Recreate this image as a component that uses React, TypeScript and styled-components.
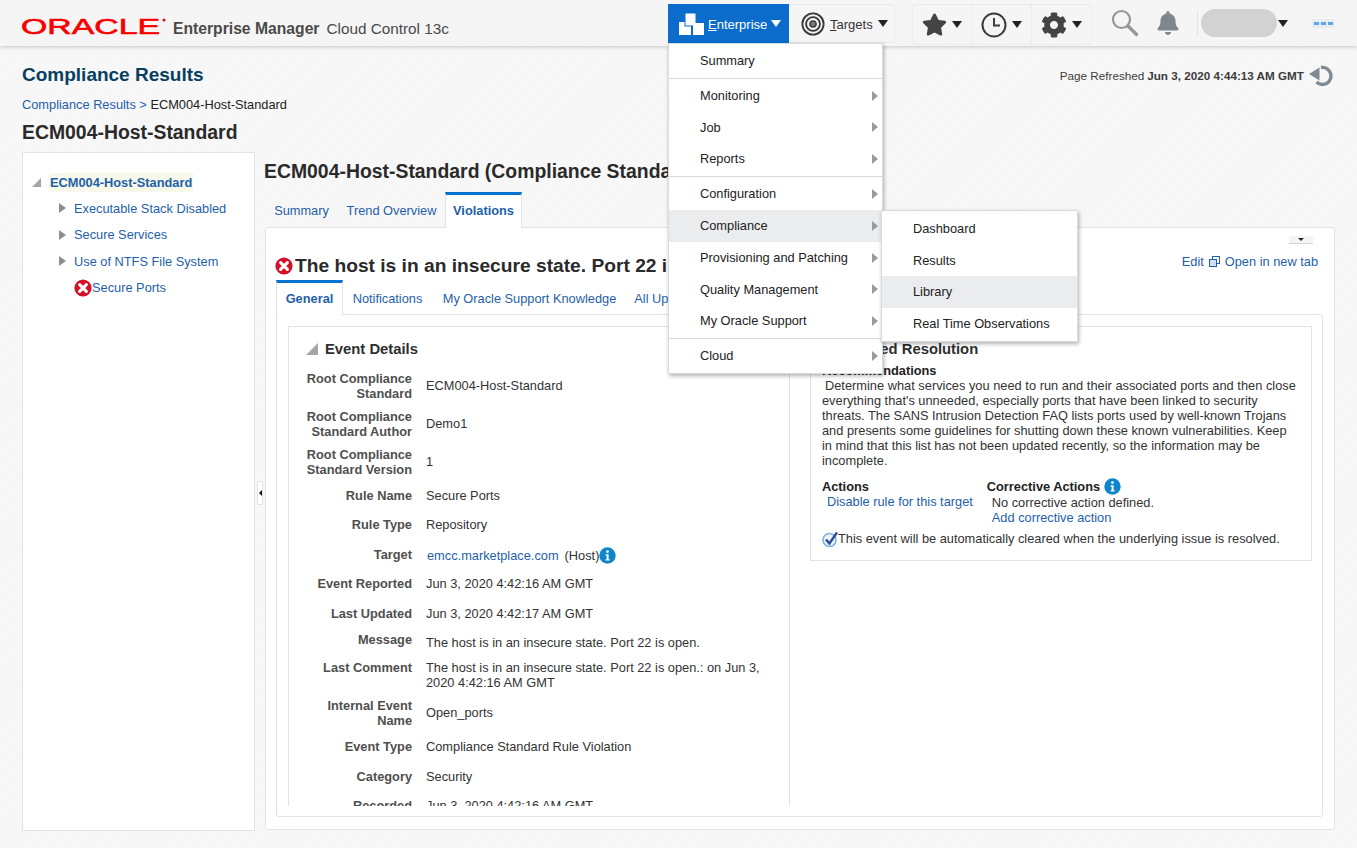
import React from 'react'
import styled, { createGlobalStyle } from 'styled-components'
import { FaBell, FaCog, FaStar } from 'react-icons/fa'

const LINK = '#1f5fa8'
const LINE = '#dfe4ea'

const GlobalStyle = createGlobalStyle`
  html, body {
    margin: 0;
    height: 848px;
    overflow: hidden;
  }
  body {
    font-family: 'Liberation Sans', Arial, sans-serif;
    font-size: 12.8px;
    color: #333;
    background: repeating-linear-gradient(135deg, #f9f9f9 0 1px, #f6f6f6 1px 3px);
  }
`

const Page = styled.div`
  width: 1357px;
  height: 848px;
  overflow: hidden;
  display: flex;
  flex-direction: column;
`

const Header = styled.header`
  height: 46px;
  flex: none;
  position: relative;
  z-index: 5;
  display: flex;
  align-items: flex-start;
  background: #f5f5f5;
  box-shadow: 0 1px 4px rgba(0, 0, 0, 0.2);
`

const Brand = styled.div`
  width: 647px;
  margin-left: 21px;
  display: flex;
  align-items: flex-start;
  padding-top: 10px;
  gap: 6px;
`

const BrandTitle = styled.div`
  margin-top: 10px;
  font-size: 15.3px;
  line-height: 18px;
  color: #4a4a4a;
  white-space: nowrap;
  b {
    font-size: 15.7px;
    margin-right: 7px;
  }
`

const EnterpriseWrap = styled.div`
  position: relative;
  margin-top: 4px;
`

const EnterpriseButton = styled.div`
  width: 121px;
  height: 39px;
  box-sizing: border-box;
  padding-left: 10px;
  display: flex;
  align-items: center;
  gap: 3px;
  background: #0b6ccb;
  color: #fff;
  font-size: 13px;
  span:first-of-type {
    margin: 2px 1px 0 0;
  }
`

const TargetsButton = styled.div`
  width: 106px;
  height: 39px;
  margin-top: 4px;
  box-sizing: border-box;
  padding-left: 12px;
  display: flex;
  align-items: center;
  gap: 5px;
  color: #333;
  font-size: 13px;
  border: 1px solid #ebebeb;
  border-left: none;
  border-radius: 0 3px 3px 0;
  span:first-of-type {
    margin-top: 2px;
  }
`

const Caret = styled.span<{ $color?: string; $gap?: number }>`
  width: 0;
  height: 0;
  margin-left: ${(p) => p.$gap ?? 3}px;
  border-left: 5px solid transparent;
  border-right: 5px solid transparent;
  border-top: 7px solid ${(p) => p.$color ?? '#222'};
`

const IconGroup = styled.div`
  margin: 4px 0 0 17px;
  display: flex;
  height: 39px;
  border: 1px solid #ebebeb;
  border-radius: 3px;
`

const IconCell = styled.div`
  width: 58.5px;
  display: flex;
  align-items: center;
  justify-content: center;
  gap: 2px;
  & + & {
    border-left: 1px solid #ebebeb;
  }
`

const HeaderTools = styled.div`
  margin-left: 19px;
  height: 46px;
  display: flex;
  align-items: center;
`

const Divider = styled.div`
  width: 1px;
  height: 26px;
  margin: 0 3px 0 17px;
  background: #dde6ee;
`

const UserPill = styled.div`
  width: 76px;
  height: 28px;
  border-radius: 14px;
  background: #d2d2d2;
`

const Dots = styled.div`
  margin-left: 24px;
  width: 23px;
  height: 9px;
  display: flex;
  align-items: center;
  justify-content: center;
  gap: 2px;
  background: #e9edf2;
  i {
    width: 5px;
    height: 3px;
    background: #5aa6f0;
  }
`

const Menu = styled.div`
  position: absolute;
  left: 0;
  top: 39px;
  width: 215px;
  height: 331px;
  background: #fff;
  border: 1px solid #d5dbe2;
  box-sizing: border-box;
  box-shadow: 1px 2px 4px rgba(0, 0, 0, 0.3);
  color: #222;
  z-index: 10;
`

const MenuSection = styled.div`
  padding: 1px 0;
  border-bottom: 1px solid #d5dbe2;
  &:last-child {
    border-bottom: none;
  }
`

const MenuItem = styled.div<{ $active?: boolean }>`
  position: relative;
  height: 31.8px;
  line-height: 31.8px;
  padding-left: 31px;
  background: ${(p) => (p.$active ? '#ebecee' : 'transparent')};
  white-space: nowrap;
`

const MenuArrow = styled.span`
  position: absolute;
  right: 4px;
  top: 50%;
  margin-top: -5px;
  width: 0;
  height: 0;
  border-top: 5px solid transparent;
  border-bottom: 5px solid transparent;
  border-left: 6px solid #9a9a9a;
`

const SubMenu = styled.div`
  position: absolute;
  left: 212px;
  top: 0;
  width: 197px;
  height: 132px;
  padding: 2px 0 0;
  box-sizing: border-box;
  background: #fff;
  border: 1px solid #d5dbe2;
  box-shadow: 1px 2px 4px rgba(0, 0, 0, 0.3);
`

const SubItem = styled.div<{ $active?: boolean }>`
  height: 31.7px;
  line-height: 31.7px;
  padding-left: 31px;
  background: ${(p) => (p.$active ? '#ebecee' : 'transparent')};
`

const Main = styled.main`
  flex: 1;
  min-height: 0;
  padding: 0 22px;
  display: flex;
  flex-direction: column;
`

const TitleRow = styled.div`
  height: 50px;
  display: flex;
  align-items: flex-start;
  justify-content: space-between;
  padding-top: 17px;
  box-sizing: border-box;
`

const PageTitle = styled.h1`
  margin: 0;
  font-size: 19px;
  line-height: 23px;
  font-weight: bold;
  color: #07405f;
`

const Refreshed = styled.div`
  margin: -1px 1px 0 0;
  display: flex;
  align-items: center;
  gap: 4px;
  font-size: 11.7px;
  line-height: 23px;
  color: #3c3c3c;
  b {
    margin-left: 3px;
  }
`

const Crumbs = styled.div`
  height: 17px;
  line-height: 17px;
  color: #222;
  a {
    color: ${LINK};
  }
`

const SubTitle = styled.h2`
  margin: 7px 0 8px;
  font-size: 19.4px;
  line-height: 24px;
  font-weight: bold;
  color: #2a2a2a;
`

const Body = styled.div`
  height: 679px;
  flex: none;
  display: flex;
`

const TreePanel = styled.aside`
  width: 233px;
  flex: none;
  box-sizing: border-box;
  background: #fff;
  border: 1px solid ${LINE};
  padding-top: 20px;
`

const TreeRoot = styled.div`
  height: 19px;
  display: flex;
  align-items: center;
  margin-bottom: 3px;
`

const RootLabel = styled.span`
  margin-left: 8px;
  padding: 0 1px;
  line-height: 19px;
  font-weight: bold;
  color: ${LINK};
  background: #f6f8ea;
`

const TreeChild = styled.div`
  height: 26.5px;
  display: flex;
  align-items: center;
  padding-left: 51px;
  color: ${LINK};
`

const TreeToggle = styled.span`
  width: 0;
  height: 0;
  margin: 0 8px 0 -15px;
  border-top: 5px solid transparent;
  border-bottom: 5px solid transparent;
  border-left: 7px solid #8f8f8f;
`

const OpenToggle = styled.span<{ $ml: number; $size: number }>`
  width: 0;
  height: 0;
  margin-left: ${(p) => p.$ml}px;
  border-left: ${(p) => p.$size}px solid transparent;
  border-bottom: ${(p) => p.$size}px solid #a6a6a6;
`

const Splitter = styled.div`
  width: 10px;
  flex: none;
  display: flex;
  align-items: center;
  justify-content: center;
`

const SplitterHandle = styled.div`
  width: 6px;
  height: 24px;
  margin-top: 2px;
  display: flex;
  align-items: center;
  justify-content: center;
  background: #fff;
  border: 1px solid ${LINE};
  box-sizing: border-box;
  &::before {
    content: '';
    border-top: 3px solid transparent;
    border-bottom: 3px solid transparent;
    border-right: 3px solid #111;
  }
`

const Content = styled.section`
  flex: 1;
  min-width: 0;
  display: flex;
  flex-direction: column;
`

const ContentTitle = styled.h2`
  margin: 7px 0 9px -1px;
  font-size: 19.4px;
  line-height: 24px;
  font-weight: bold;
  color: #2a2a2a;
  white-space: nowrap;
  overflow: hidden;
`

const Tabs = styled.div<{ $h: number }>`
  height: ${(p) => p.$h}px;
  flex: none;
  display: flex;
  position: relative;
  z-index: 1;
`

const Tab = styled.div<{ $w: number; $active?: boolean }>`
  width: ${(p) => p.$w}px;
  box-sizing: border-box;
  height: calc(100% + 1px);
  line-height: ${(p) => (p.$active ? 32 : 38)}px;
  text-align: center;
  color: ${LINK};
  white-space: nowrap;
  font-weight: ${(p) => (p.$active ? 'bold' : 'normal')};
  background: ${(p) => (p.$active ? '#fff' : 'transparent')};
  border-top: ${(p) => (p.$active ? '3px solid #0572ce' : 'none')};
  border-left: ${(p) => (p.$active ? `1px solid ${LINE}` : 'none')};
  border-right: ${(p) => (p.$active ? `1px solid ${LINE}` : 'none')};
`

const TabPanel = styled.div`
  flex: 1;
  min-height: 0;
  margin-bottom: 1px;
  position: relative;
  display: flex;
  flex-direction: column;
  padding: 0 11px 12px 10px;
  background: #fff;
  border: 1px solid ${LINE};
  border-radius: 3px;
`

const PanelTop = styled.div`
  height: 52px;
  flex: none;
  display: flex;
  justify-content: space-between;
  align-items: flex-start;
  white-space: nowrap;
`

const Headline = styled.div`
  margin-top: 26px;
  margin-left: -1px;
  display: flex;
  align-items: center;
  gap: 2px;
  font-size: 19.2px;
  line-height: 24px;
  font-weight: bold;
  color: #2a2a2a;
`

const EditLinks = styled.div`
  margin: 26px 5px 0 0;
  display: flex;
  align-items: center;
  gap: 5px;
  color: ${LINK};
`

const DropTab = styled.div`
  position: absolute;
  right: 21px;
  top: 8px;
  width: 24px;
  height: 7px;
  display: flex;
  justify-content: center;
  background: #f4f4f4;
  border-bottom: 1px solid #d5d5d5;
  &::before {
    content: '';
    margin-top: 2px;
    height: 0;
    border-left: 3px solid transparent;
    border-right: 3px solid transparent;
    border-top: 3px solid #222;
  }
`

const InnerPanel = styled.div`
  flex: 1;
  min-height: 0;
  display: flex;
  gap: 20px;
  padding: 11px 10px 10px 11px;
  background: #fff;
  border: 1px solid ${LINE};
  border-radius: 3px;
`

const DetailBox = styled.div`
  width: 502px;
  height: 480px;
  flex: none;
  box-sizing: border-box;
  border: 1px solid ${LINE};
  border-bottom: none;
  overflow: hidden;
  padding-top: 12px;
`

const RightBox = styled.div`
  width: 502px;
  height: 235px;
  flex: none;
  box-sizing: border-box;
  border: 1px solid ${LINE};
  padding: 12px 11px 0;
`

const SectionHead = styled.div`
  height: 20px;
  display: flex;
  align-items: center;
  gap: 7px;
  font-size: 14.8px;
  font-weight: bold;
  color: #2f2f2f;
  margin-bottom: 4px;
  white-space: nowrap;
`

const DetailHead = styled(SectionHead)`
  margin-left: 17px;
`

const DetailList = styled.div`
  margin-top: 7.5px;
`

const DetailRow = styled.div<{ $tall?: boolean; $h?: number }>`
  display: grid;
  grid-template-columns: 123px 1fr;
  column-gap: 14px;
  height: ${(p) => p.$h ?? (p.$tall ? 38 : 29.5)}px;
  box-sizing: border-box;
  padding-top: ${(p) => (p.$tall ? 4 : 7)}px;
`

const DetailLabel = styled.div`
  text-align: right;
  font-weight: bold;
  line-height: 15px;
  color: #4f4f4f;
`

const DetailValue = styled.div<{ $top?: number }>`
  line-height: 15px;
  color: #333;
  display: flex;
  flex-wrap: wrap;
  align-items: center;
  align-self: start;
  margin-top: ${(p) => p.$top ?? 0}px;
`

const Link = styled.a`
  color: ${LINK};
  white-space: nowrap;
`

const HostLink = styled(Link)`
  margin-left: 1px;
`

const HostSuffix = styled.span`
  margin-left: 6px;
`

const Paragraph = styled.p`
  margin: 0 0 10px;
  line-height: 15px;
  color: #333;
  white-space: nowrap;
  &::first-line {
    word-spacing: 0.1px;
  }
  text-indent: 3px;
`

const Strong = styled.div`
  height: 16px;
  font-weight: bold;
  line-height: 15px;
  color: #222;
  display: flex;
  align-items: center;
  gap: 4px;
`

const RecommendTitle = styled(Strong)`
  height: 15px;
`

const ActionColumns = styled.div`
  display: flex;
  gap: 14px;
  line-height: 15px;
`

const ActionBlock = styled.div`
  display: flex;
  flex-direction: column;
`

const ActionBody = styled.div<{ $top: number }>`
  padding-left: 5px;
  padding-top: ${(p) => p.$top}px;
`

const AutoClear = styled.div`
  margin-top: 5px;
  display: flex;
  align-items: center;
  color: #333;
  line-height: 18px;
`

/* icons */

const ErrorIcon = ({ size = 18 }: { size?: number }) => (
  <svg width={size} height={size} viewBox="0 0 18 18" style={{ flex: 'none' }}>
    <circle cx="9" cy="9" r="8.6" fill="#d3122a" />
    <path d="M5.6 5.6l6.8 6.8M12.4 5.6l-6.8 6.8" stroke="#fff" strokeWidth="3" strokeLinecap="round" />
  </svg>
)

const InfoIcon = () => (
  <svg width="17" height="17" viewBox="0 0 17 17" style={{ flex: 'none' }}>
    <circle cx="8.5" cy="8.5" r="8.2" fill="#0f86cc" />
    <circle cx="8.5" cy="4.6" r="1.4" fill="#fff" />
    <path d="M6.6 7.2h3v5h1v1.3H6.6v-1.3h1v-3.7h-1z" fill="#fff" />
  </svg>
)

const OracleLogo = () => (
  <svg width="146" height="30" viewBox="0 0 146 30" style={{ flex: 'none' }}>
    <text
      x="0"
      y="24"
      textLength="139"
      lengthAdjust="spacingAndGlyphs"
      fontFamily="'Liberation Sans', Arial, sans-serif"
      fontSize="22.5"
      fill="#f80000"
      stroke="#f80000"
      strokeWidth="0.6"
    >
      ORACLE
    </text>
    <circle cx="143" cy="10" r="1.5" fill="#f80000" />
  </svg>
)

const EnterpriseIcon = () => (
  <svg width="27" height="24" viewBox="0 0 27 24" fill="#fff" style={{ flex: 'none' }}>
    <rect x="1" y="10" width="12" height="13" />
    <rect x="7" y="1" width="11" height="13" stroke="#0b6ccb" strokeWidth="1" />
    <rect x="15" y="11" width="11" height="12" />
  </svg>
)

const TargetIcon = () => (
  <svg width="24" height="24" viewBox="0 0 26 26" fill="none" stroke="#3a3a3a" style={{ flex: 'none' }}>
    <circle cx="13" cy="13" r="11.5" strokeWidth="2" />
    <circle cx="13" cy="13" r="7.5" strokeWidth="2" />
    <circle cx="13" cy="13" r="3.4" fill="#777" strokeWidth="1.5" />
  </svg>
)

const ClockIcon = () => (
  <svg width="26" height="26" viewBox="0 0 26 26" fill="none" stroke="#3c3c3c" strokeWidth="2">
    <circle cx="13" cy="13" r="11.5" />
    <path d="M13 6v7.5h6" />
  </svg>
)

const SearchIcon = () => (
  <svg width="28" height="28" viewBox="0 0 28 28" fill="none" style={{ flex: 'none' }}>
    <circle cx="10.5" cy="10.5" r="8.5" stroke="#92979b" strokeWidth="2.2" />
    <path d="M17 17l8.5 8.5" stroke="#92979b" strokeWidth="3.2" strokeLinecap="round" />
  </svg>
)

const RefreshIcon = () => (
  <svg width="26" height="26" viewBox="0 0 26 26" fill="none" style={{ flex: 'none' }}>
    <path d="M13 5.5A8.5 8.5 0 1 1 8.5 20" stroke="#7f8b94" strokeWidth="3.4" />
    <path d="M1 12L11.5 5.5v13z" fill="#7f8b94" />
  </svg>
)

const CheckIcon = () => (
  <svg width="16" height="18" viewBox="0 0 16 18" fill="none" style={{ flex: 'none' }}>
    <circle cx="7.5" cy="10" r="6.5" stroke="#7fb3da" strokeWidth="1.6" fill="#eef5fa" />
    <path d="M4 9.5l3.4 4L15 2.5" stroke="#2b4f8f" strokeWidth="2.4" />
  </svg>
)

const CopyIcon = () => (
  <svg width="11" height="11" viewBox="0 0 11 11" fill="none" stroke={LINK} style={{ flex: 'none' }}>
    <rect x="3.5" y="0.5" width="7" height="7" />
    <rect x="0.5" y="3.5" width="7" height="7" fill="#cfe0f2" />
  </svg>
)

/* data */

const details: { label: React.ReactNode; value: React.ReactNode; tall?: boolean; h?: number; top?: number }[] = [
  { label: <>Root Compliance<br />Standard</>, value: 'ECM004-Host-Standard', tall: true, top: 7 },
  { label: <>Root Compliance<br />Standard Author</>, value: 'Demo1', tall: true, top: 7 },
  { label: <>Root Compliance<br />Standard Version</>, value: '1', tall: true, top: 7 },
  { label: 'Rule Name', value: 'Secure Ports' },
  { label: 'Rule Type', value: 'Repository' },
  {
    label: 'Target',
    value: (
      <>
        <HostLink>emcc.marketplace.com</HostLink>
        <HostSuffix>(Host)</HostSuffix>
        <InfoIcon />
      </>
    ),
  },
  { label: 'Event Reported', value: 'Jun 3, 2020 4:42:16 AM GMT' },
  { label: 'Last Updated', value: 'Jun 3, 2020 4:42:17 AM GMT', h: 26.5 },
  { label: 'Message', value: 'The host is in an insecure state. Port 22 is open.', h: 28, top: 3 },
  {
    label: 'Last Comment',
    value: <>The host is in an insecure state. Port 22 is open.: on Jun 3,<br />2020 4:42:16 AM GMT</>,
    h: 41,
    top: 0,
  },
  { label: <>Internal Event<br />Name</>, value: 'Open_ports', tall: true, top: 7 },
  { label: 'Event Type', value: 'Compliance Standard Rule Violation' },
  { label: 'Category', value: 'Security' },
  { label: 'Recorded', value: 'Jun 3, 2020 4:42:16 AM GMT' },
]

const menuSections: { name: string; arrow?: boolean; active?: boolean }[][] = [
  [{ name: 'Summary' }],
  [
    { name: 'Monitoring', arrow: true },
    { name: 'Job', arrow: true },
    { name: 'Reports', arrow: true },
  ],
  [
    { name: 'Configuration', arrow: true },
    { name: 'Compliance', arrow: true, active: true },
    { name: 'Provisioning and Patching', arrow: true },
    { name: 'Quality Management', arrow: true },
    { name: 'My Oracle Support', arrow: true },
  ],
  [{ name: 'Cloud', arrow: true }],
]

const subItems = ['Dashboard', 'Results', 'Library', 'Real Time Observations']

export default function App() {
  return (
    <Page>
      <GlobalStyle />
      <Header>
        <Brand>
          <OracleLogo />
          <BrandTitle>
            <b>Enterprise Manager</b>Cloud Control 13c
          </BrandTitle>
        </Brand>
        <EnterpriseWrap>
          <EnterpriseButton>
            <EnterpriseIcon />
            <span>
              <u>E</u>nterprise
            </span>
            <Caret $color="#fff" $gap={0} />
          </EnterpriseButton>
          <Menu>
            {menuSections.map((section, i) => (
              <MenuSection key={i}>
                {section.map((item) => (
                  <MenuItem key={item.name} $active={item.active}>
                    {item.name}
                    {item.arrow && <MenuArrow />}
                    {item.active && (
                      <SubMenu>
                        {subItems.map((s) => (
                          <SubItem key={s} $active={s === 'Library'}>
                            {s}
                          </SubItem>
                        ))}
                      </SubMenu>
                    )}
                  </MenuItem>
                ))}
              </MenuSection>
            ))}
          </Menu>
        </EnterpriseWrap>
        <TargetsButton>
          <TargetIcon />
          <span>
            <u>T</u>argets
          </span>
          <Caret $gap={0} />
        </TargetsButton>
        <IconGroup>
          <IconCell>
            <FaStar size={25} color="#444" />
            <Caret $gap={3} />
          </IconCell>
          <IconCell>
            <ClockIcon />
            <Caret $gap={3} />
          </IconCell>
          <IconCell>
            <FaCog size={26} color="#444" />
            <Caret $gap={3} />
          </IconCell>
        </IconGroup>
        <HeaderTools>
          <SearchIcon />
          <FaBell size={24} color="#80868b" style={{ marginLeft: 17 }} />
          <Divider />
          <UserPill />
          <Caret $gap={1} />
          <Dots>
            <i />
            <i />
            <i />
          </Dots>
        </HeaderTools>
      </Header>
      <Main>
        <TitleRow>
          <PageTitle>Compliance Results</PageTitle>
          <Refreshed>
            <span>
              Page Refreshed<b>Jun 3, 2020 4:44:13 AM GMT</b>
            </span>
            <RefreshIcon />
          </Refreshed>
        </TitleRow>
        <Crumbs>
          <a>Compliance Results &gt;</a> ECM004-Host-Standard
        </Crumbs>
        <SubTitle>ECM004-Host-Standard</SubTitle>
        <Body>
          <TreePanel>
            <TreeRoot>
              <OpenToggle $ml={9} $size={9} />
              <RootLabel>ECM004-Host-Standard</RootLabel>
            </TreeRoot>
            <TreeChild>
              <TreeToggle />
              Executable Stack Disabled
            </TreeChild>
            <TreeChild>
              <TreeToggle />
              Secure Services
            </TreeChild>
            <TreeChild>
              <TreeToggle />
              Use of NTFS File System
            </TreeChild>
            <TreeChild>
              <ErrorIcon />
              Secure Ports
            </TreeChild>
          </TreePanel>
          <Splitter>
            <SplitterHandle />
          </Splitter>
          <Content>
            <ContentTitle>ECM004-Host-Standard (Compliance Standard)</ContentTitle>
            <Tabs $h={35}>
              <Tab $w={73}>Summary</Tab>
              <Tab $w={107}>Trend Overview</Tab>
              <Tab $w={77} $active>
                Violations
              </Tab>
            </Tabs>
            <TabPanel>
              <DropTab />
              <PanelTop>
                <Headline>
                  <ErrorIcon />
                  The host is in an insecure state. Port 22 is open.
                </Headline>
                <EditLinks>
                  Edit <CopyIcon /> Open in new tab
                </EditLinks>
              </PanelTop>
              <Tabs $h={34}>
                <Tab $w={67} $active>
                  General
                </Tab>
                <Tab $w={89}>Notifications</Tab>
                <Tab $w={195}>My Oracle Support Knowledge</Tab>
                <Tab $w={80}>All Updates</Tab>
              </Tabs>
              <InnerPanel>
                <DetailBox>
                  <DetailHead>
                    <OpenToggle $ml={0} $size={12} />
                    Event Details
                  </DetailHead>
                  <DetailList>
                    {details.map((d, i) => (
                      <DetailRow key={i} $tall={d.tall} $h={d.h}>
                        <DetailLabel>{d.label}</DetailLabel>
                        <DetailValue $top={d.top}>{d.value}</DetailValue>
                      </DetailRow>
                    ))}
                  </DetailList>
                </DetailBox>
                <RightBox>
                  <SectionHead>Suggested Resolution</SectionHead>
                  <RecommendTitle>Recommendations</RecommendTitle>
                  <Paragraph>
                    Determine what services you need to run and their associated ports and then close
                    <br />
                    everything that's unneeded, especially ports that have been linked to security
                    <br />
                    threats. The SANS Intrusion Detection FAQ lists ports used by well-known Trojans
                    <br />
                    and presents some guidelines for shutting down these known vulnerabilities. Keep
                    <br />
                    in mind that this list has not been updated recently, so the information may be
                    <br />
                    incomplete.
                  </Paragraph>
                  <ActionColumns>
                    <ActionBlock>
                      <Strong>Actions</Strong>
                      <ActionBody $top={0}>
                        <Link>Disable rule for this target</Link>
                      </ActionBody>
                    </ActionBlock>
                    <ActionBlock>
                      <Strong>
                        Corrective Actions <InfoIcon />
                      </Strong>
                      <ActionBody $top={1}>
                        No corrective action defined.
                        <br />
                        <Link>Add corrective action</Link>
                      </ActionBody>
                    </ActionBlock>
                  </ActionColumns>
                  <AutoClear>
                    <CheckIcon />
                    This event will be automatically cleared when the underlying issue is resolved.
                  </AutoClear>
                </RightBox>
              </InnerPanel>
            </TabPanel>
          </Content>
        </Body>
      </Main>
    </Page>
  )
}
